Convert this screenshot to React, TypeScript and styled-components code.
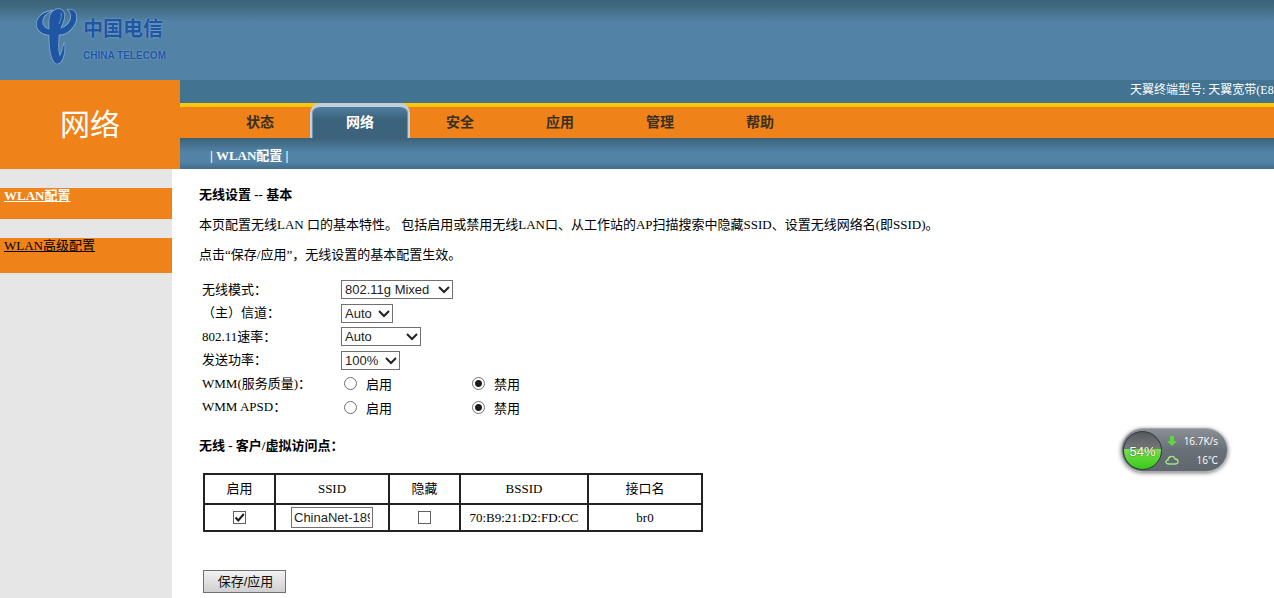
import React from 'react';
import styled, { createGlobalStyle, css } from 'styled-components';

const serif = '"Liberation Serif", "Noto Sans CJK SC", serif';
const sans = '"Liberation Sans", "Noto Sans CJK SC", sans-serif';
const orange = '#ef8219';

const GlobalStyle = createGlobalStyle`
  * { box-sizing: border-box; }
  body {
    margin: 0;
    background: #fff;
    color: #000;
    font-family: ${serif};
    font-size: 13px;
    line-height: 16px;
  }
`;

const Page = styled.div`
  position: relative;
  display: flex;
  flex-direction: column;
  min-height: 100vh;
  overflow: hidden;
`;

const Banner = styled.header`
  height: 80px;
  padding: 6px 36px;
  background: linear-gradient(#3b6279 0, #3f687f 6px, #5282a6 22px);
`;

const Logo = styled.a`
  display: flex;
  width: 130px;
  color: #1f56a4;
  text-decoration: none;
`;

const Emblem = styled.svg`
  flex: none;
  width: 47px;
  height: 60px;
`;

const LogoText = styled.span`
  display: flex;
  flex-direction: column;
  font-family: ${sans};
  font-weight: bold;
  white-space: nowrap;
  text-shadow: 0 0 2px #8fb0d6;
`;

const LogoName = styled.span`
  padding-top: 4px;
  font-size: 20px;
  line-height: 38px;
`;

const LogoLatin = styled.span`
  font-size: 10px;
  line-height: 16px;
`;

const Navigation = styled.div`
  display: flex;
  height: 89px;
`;

const SectionTitle = styled.h1`
  flex: none;
  width: 180px;
  margin: 0;
  background: ${orange};
  color: #fff;
  font-size: 30px;
  font-weight: normal;
  line-height: 89px;
  text-align: center;
`;

const NavColumn = styled.div`
  flex: 1;
  min-width: 0;
`;

const ModelStrip = styled.div`
  display: flex;
  justify-content: flex-end;
  height: 23px;
  background: #427391;
  color: #fff;
  font-size: 12px;
  line-height: 20px;
`;

const ModelText = styled.span`
  width: 144px;
  overflow: hidden;
  white-space: nowrap;
`;

const Tabs = styled.nav`
  display: flex;
  height: 35px;
  padding-left: 30px;
  background: linear-gradient(#fbc80c 4px, ${orange} 4px);
`;

const Tab = styled.a<{ $active?: boolean }>`
  width: 100px;
  color: #3a3020;
  font-family: ${sans};
  font-size: 14px;
  font-weight: bold;
  line-height: 38px;
  text-align: center;
  text-decoration: none;
  ${(p) =>
    p.$active &&
    css`
      border: solid #c3ced8;
      border-width: 4px 2px 0;
      border-radius: 10px 10px 0 0;
      background: linear-gradient(#4f7fa2 0, #3c637c 12px, #3c637c 100%);
      box-shadow: inset 1px 0 #6d93b0, inset -1px 0 #6d93b0;
      color: #fff;
      line-height: 30px;
    `}
`;

const SubNav = styled.nav`
  height: 31px;
  padding-left: 30px;
  background: linear-gradient(#3b6279 0, #5282a6 14px, #5282a6 24px, #426d8b 100%);
  color: #fff;
  font-weight: bold;
  line-height: 36px;
`;

const SubNavLink = styled.a`
  color: #fff;
  text-decoration: none;
`;

const Body = styled.div`
  display: flex;
  flex: 1;
`;

const Sidebar = styled.aside`
  flex: none;
  width: 172px;
  padding-top: 19px;
  background: #e6e6e6;
`;

const SideItem = styled.a<{ $active?: boolean }>`
  display: block;
  height: ${(p) => (p.$active ? 31 : 35)}px;
  margin-bottom: 19px;
  padding-left: 4px;
  background: ${orange};
  color: ${(p) => (p.$active ? '#fff' : '#000')};
  font-weight: ${(p) => (p.$active ? 'bold' : 'normal')};
`;

const Content = styled.main`
  flex: 1;
  min-width: 0;
  padding: 18px 20px 5px 27px;
`;

const Heading = styled.h2`
  margin: 0;
  font-size: 13px;
  line-height: 16px;
`;

const Paragraph = styled.p`
  margin: 14px 0;
`;

const Fields = styled.div`
  margin: 15px 0 19px;
  padding-left: 3px;
`;

const Field = styled.div`
  display: flex;
  align-items: center;
  height: 23px;
  &:nth-child(even) { height: 24px; }
`;

const FieldName = styled.label`
  width: 139px;
  white-space: nowrap;
`;

const SelectBox = styled.span<{ $width: number }>`
  position: relative;
  display: flex;
  width: ${(p) => p.$width}px;
`;

const Select = styled.select`
  appearance: none;
  width: 100%;
  height: 19px;
  margin: 0;
  padding: 0 0 0 3px;
  border: 1px solid #707070;
  border-radius: 0;
  background: #fff;
  color: #222;
  font-family: ${sans};
  font-size: 13px;
  line-height: 17px;
`;

const Chevron = styled.svg`
  position: absolute;
  top: 5px;
  right: 3px;
  width: 12px;
  height: 9px;
  pointer-events: none;
`;

const Choice = styled.label`
  display: flex;
  align-items: center;
  width: 128px;
  padding-left: 3px;
`;

const ChoiceText = styled.span`
  padding: 3px 0 0 9px;
`;

const Radio = styled.input`
  appearance: none;
  width: 13px;
  height: 13px;
  margin: 0;
  border: 1px solid #707070;
  border-radius: 50%;
  background: #fff;
  &:checked {
    background: radial-gradient(circle, #1c1c1c 3px, #fff 4px);
  }
`;

const AccessPoints = styled.table`
  width: 500px;
  margin: 19px 0 38px 4px;
  border-collapse: collapse;
  table-layout: fixed;
  text-align: center;
`;

const Cell = styled.td`
  height: 27px;
  padding: 0;
  border: 2px solid #222;
  font-weight: normal;
`;

const HeadCell = styled(Cell)<{ $width: number }>`
  width: ${(p) => p.$width}px;
  height: 30px;
`;

const SsidInput = styled.input`
  display: block;
  width: 82px;
  height: 21px;
  margin: 0 auto;
  padding: 0 2px;
  border: 1px solid #707070;
  color: #222;
  font-family: ${sans};
  font-size: 13px;
`;

const CheckBoxFrame = styled.span`
  position: relative;
  display: block;
  width: 13px;
  height: 13px;
  margin: 0 auto;
`;

const CheckBox = styled.input`
  appearance: none;
  display: block;
  width: 13px;
  height: 13px;
  margin: 0;
  border: 1px solid #606060;
  background: #fff;
  & + svg { display: none; }
  &:checked + svg { display: block; }
`;

const CheckMark = styled.svg`
  position: absolute;
  inset: 0;
  pointer-events: none;
`;

const SaveButton = styled.button`
  display: block;
  width: 83px;
  height: 23px;
  margin-left: 4px;
  padding: 0 0 0 2px;
  border: 1px solid #707070;
  background: linear-gradient(#f2f2f2, #d0d0d0);
  color: #111;
  font-family: ${sans};
  font-size: 13px;
  line-height: 18px;
`;

const Monitor = styled.aside`
  position: absolute;
  top: 428px;
  right: 46px;
  display: flex;
  align-items: center;
  width: 107px;
  height: 44px;
  padding: 0 9px 0 1px;
  border: 1px solid #a4a8ab;
  border-radius: 22px;
  background: linear-gradient(#8a9095, #686f76 50%, #60676f);
  box-shadow: 0 1px 4px #777;
  color: #fff;
  font-family: "Open Sans", ${sans};
  font-size: 10px;
`;

const Gauge = styled.span`
  flex: none;
  width: 39px;
  height: 39px;
  border: 1px solid #30383a;
  border-radius: 50%;
  background: linear-gradient(#56595c 0, #77797c 46%, #7be04b 46%, #37c81c 100%);
  font-family: ${sans};
  font-size: 13px;
  line-height: 40px;
  text-align: center;
  text-shadow: 0 0 2px #254d1c;
`;

const Readings = styled.span`
  display: flex;
  flex: 1;
  flex-direction: column;
  gap: 3px;
  padding-left: 3px;
`;

const Reading = styled.span`
  display: flex;
  align-items: center;
  justify-content: space-between;
  height: 16px;
  white-space: nowrap;
`;

const selects = [
  { id: 'mode', name: '无线模式：', value: '802.11g Mixed', width: 112 },
  { id: 'channel', name: '（主）信道：', value: 'Auto', width: 52 },
  { id: 'rate', name: '802.11速率：', value: 'Auto', width: 80 },
  { id: 'power', name: '发送功率：', value: '100%', width: 59 },
];

const switches = [
  { id: 'wmm', name: 'WMM(服务质量)：' },
  { id: 'apsd', name: 'WMM APSD：' },
];

const tabs = ['状态', '网络', '安全', '应用', '管理', '帮助'];

const columns = [
  { name: '启用', width: 71 },
  { name: 'SSID', width: 114 },
  { name: '隐藏', width: 71 },
  { name: 'BSSID', width: 128 },
  { name: '接口名', width: 114 },
];

function TickBox({ label, checked }: { label: string; checked?: boolean }) {
  return (
    <CheckBoxFrame>
      <CheckBox type="checkbox" aria-label={label} defaultChecked={checked} />
      <CheckMark width="13" height="13" viewBox="0 0 13 13">
        <path d="M2.5 6.5 L5.3 9.5 L10.8 3" fill="none" stroke="#1c1c1c" strokeWidth="2" />
      </CheckMark>
    </CheckBoxFrame>
  );
}

export default function App() {
  return (
    <Page>
      <GlobalStyle />
      <Banner>
        <Logo href="#home">
          <Emblem viewBox="18 6 141 180" aria-hidden="true">
            <g stroke="#84a9d2" strokeWidth="5" strokeLinejoin="round">
              <path d="M66 20 C38 24 20 40 20 60 C20 82 40 93 64 93 L98 91 C122 84 140 60 139 36 C138 24 130 15 114 17 C125 26 126 42 118 54 C110 68 92 76 76 77 C52 80 37 70 37 52 C38 38 48 28 66 20 Z" />
              <path d="M58 50 C58 30 70 15 86 15 C100 16 106 28 102 44 C98 60 88 76 86 96 C84 120 84 146 90 157 C96 148 98 132 103 118 C106 140 100 178 82 179 C66 178 58 140 58 100 Z" />
            </g>
            <g fill="#1f56a4">
              <path d="M66 20 C38 24 20 40 20 60 C20 82 40 93 64 93 L98 91 C122 84 140 60 139 36 C138 24 130 15 114 17 C125 26 126 42 118 54 C110 68 92 76 76 77 C52 80 37 70 37 52 C38 38 48 28 66 20 Z" />
              <path d="M58 50 C58 30 70 15 86 15 C100 16 106 28 102 44 C98 60 88 76 86 96 C84 120 84 146 90 157 C96 148 98 132 103 118 C106 140 100 178 82 179 C66 178 58 140 58 100 Z" />
            </g>
            <path d="M92 26 C97 34 92 48 87 60" fill="none" stroke="#6d97c4" strokeWidth="3" />
          </Emblem>
          <LogoText>
            <LogoName>中国电信</LogoName>
            <LogoLatin>CHINA TELECOM</LogoLatin>
          </LogoText>
        </Logo>
      </Banner>

      <Navigation>
        <SectionTitle>网络</SectionTitle>
        <NavColumn>
          <ModelStrip>
            <ModelText>天翼终端型号: 天翼宽带(E8</ModelText>
          </ModelStrip>
          <Tabs>
            {tabs.map((name) => (
              <Tab key={name} href="#tab" $active={name === '网络'}>
                {name}
              </Tab>
            ))}
          </Tabs>
          <SubNav>
            | <SubNavLink href="#wlan">WLAN配置</SubNavLink> |
          </SubNav>
        </NavColumn>
      </Navigation>

      <Body>
        <Sidebar>
          <SideItem href="#wlan" $active>WLAN配置</SideItem>
          <SideItem href="#advanced">WLAN高级配置</SideItem>
        </Sidebar>
        <Content>
          <Heading>无线设置 -- 基本</Heading>
          <Paragraph>
            本页配置无线LAN 口的基本特性。 包括启用或禁用无线LAN口、从工作站的AP扫描搜索中隐藏SSID、设置无线网络名(即SSID)。
          </Paragraph>
          <Paragraph>点击“保存/应用”，无线设置的基本配置生效。</Paragraph>

          <Fields>
            {selects.map((s) => (
              <Field key={s.id}>
                <FieldName htmlFor={s.id}>{s.name}</FieldName>
                <SelectBox $width={s.width}>
                  <Select id={s.id}>
                    <option>{s.value}</option>
                  </Select>
                  <Chevron viewBox="0 0 12 9">
                    <path d="M1 2 L6 7 L11 2" fill="none" stroke="#222" strokeWidth="2" />
                  </Chevron>
                </SelectBox>
              </Field>
            ))}
            {switches.map((s) => (
              <Field key={s.id} role="radiogroup" aria-labelledby={s.id}>
                <FieldName as="span" id={s.id}>{s.name}</FieldName>
                <Choice>
                  <Radio type="radio" name={s.id} />
                  <ChoiceText>启用</ChoiceText>
                </Choice>
                <Choice>
                  <Radio type="radio" name={s.id} defaultChecked />
                  <ChoiceText>禁用</ChoiceText>
                </Choice>
              </Field>
            ))}
          </Fields>

          <Heading>无线 - 客户/虚拟访问点：</Heading>
          <AccessPoints>
            <thead>
              <tr>
                {columns.map((c) => (
                  <HeadCell as="th" key={c.name} $width={c.width}>{c.name}</HeadCell>
                ))}
              </tr>
            </thead>
            <tbody>
              <tr>
                <Cell><TickBox label="启用" checked /></Cell>
                <Cell><SsidInput aria-label="SSID" defaultValue="ChinaNet-189" /></Cell>
                <Cell><TickBox label="隐藏" /></Cell>
                <Cell>70:B9:21:D2:FD:CC</Cell>
                <Cell>br0</Cell>
              </tr>
            </tbody>
          </AccessPoints>
          <SaveButton type="button">保存/应用</SaveButton>
        </Content>
      </Body>

      <Monitor>
        <Gauge>54%</Gauge>
        <Readings>
          <Reading>
            <svg width="14" height="12" viewBox="0 0 14 12">
              <path d="M5 1 H9 V6 H12 L7 11 L2 6 H5 Z" fill="#5fd63c" />
            </svg>
            16.7K/s
          </Reading>
          <Reading>
            <svg width="14" height="12" viewBox="0 0 14 12">
              <path d="M4 10 C0 10 0 6 3 6 C3 2 9 1 10 5 C14 5 14 10 10 10 Z" fill="none" stroke="#a5e68c" strokeWidth="1.3" />
            </svg>
            16℃
          </Reading>
        </Readings>
      </Monitor>
    </Page>
  );
}
